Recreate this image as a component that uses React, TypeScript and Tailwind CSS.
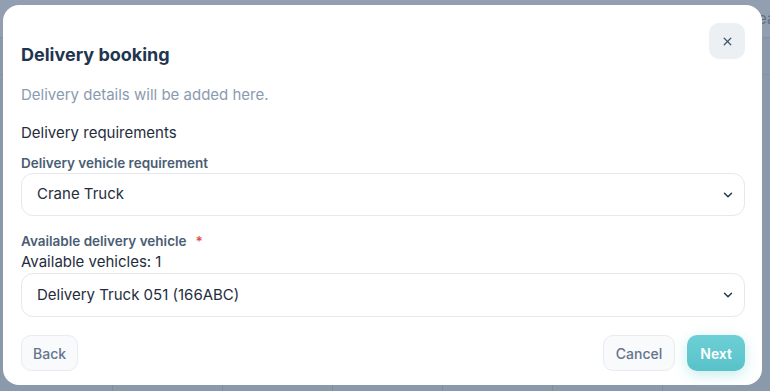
import { ChevronDown, X } from "lucide-react";

const columns = [0, 1, 2, 3, 4, 5, 6, 7];

const App = () => {
  return (
    <div className="relative h-[391px] w-[770px] overflow-hidden bg-[#8b9aab] font-['Inter',sans-serif]">
      {/* page behind the overlay */}
      <div className="flex h-full flex-col">
        <div className="h-[38px] border-b border-[#8393a5] bg-[#919fb0] pl-[758px] pt-[8px] text-[15px] text-[#5f6f82]">
          ea
        </div>
        <div className="h-[37px] border-b border-[#8393a5]" />
        <div className="flex flex-1 pl-[3px]">
          {columns.map((c) => (
            <div key={c} className="w-[110px] shrink-0 border-r border-[#7e8ea1]" />
          ))}
        </div>
      </div>

      {/* modal */}
      <div className="absolute left-[3px] top-[5px] flex h-[380px] w-[759px] flex-col rounded-[16px] bg-white pl-[18px] pr-[17px] pt-[36px]">
        <button
          type="button"
          className="absolute right-[17px] top-[18px] flex h-[36px] w-[36px] items-center justify-center rounded-[10px] bg-[#edf0f3] text-[#3f5670]"
        >
          <X size={13} strokeWidth={2.4} />
        </button>

        <h2 className="text-[18px] font-bold leading-[28px] text-[#1f3550]">
          Delivery booking
        </h2>
        <p className="mt-[14px] text-[15px] leading-[24px] text-[#8a9bb0]">
          Delivery details will be added here.
        </p>
        <p className="mt-[14px] text-[15px] leading-[24px] text-[#1f2d3d]">
          Delivery requirements
        </p>

        <label className="mt-[9px] text-[13.5px] font-semibold leading-[18px] text-[#4a5d74]">
          Delivery vehicle requirement
        </label>
        <div className="mt-[1px] flex h-[43px] items-center justify-between rounded-[12px] border border-[#e3e9ef] pl-[15px] pr-[9px] text-[15px] text-[#1f2d3d]">
          <span>Crane Truck</span>
          <ChevronDown size={14} strokeWidth={2.6} className="text-[#2a3a50]" />
        </div>

        <label className="mt-[16px] flex items-center gap-[9px] text-[13.5px] font-semibold leading-[18px] text-[#4a5d74]">
          Available delivery vehicle
          <span className="text-[#e04b4b]">*</span>
        </label>
        <p className="mt-[2px] text-[15px] leading-[20px] text-[#1f2d3d]">
          Available vehicles: 1
        </p>
        <div className="mt-[1px] flex h-[44px] items-center justify-between rounded-[12px] border border-[#e3e9ef] pl-[15px] pr-[9px] text-[15px] text-[#1f2d3d]">
          <span>Delivery Truck 051 (166ABC)</span>
          <ChevronDown size={14} strokeWidth={2.6} className="text-[#2a3a50]" />
        </div>

        <div className="mt-[18px] flex items-center justify-between">
          <button
            type="button"
            className="h-[36px] rounded-[10px] border border-[#e6ecf2] bg-[#f8fafc] px-[11px] text-[14px] font-medium text-[#64748b]"
          >
            Back
          </button>
          <div className="flex items-center gap-[12px]">
            <button
              type="button"
              className="h-[36px] rounded-[10px] border border-[#e6ecf2] bg-[#f8fafc] px-[12px] text-[14px] font-medium text-[#64748b]"
            >
              Cancel
            </button>
            <button
              type="button"
              className="h-[36px] rounded-[10px] bg-gradient-to-b from-[#6dd0d6] to-[#58c2c9] px-[13px] text-[14px] font-semibold text-white shadow-[0_4px_14px_rgba(94,201,207,0.35)]"
            >
              Next
            </button>
          </div>
        </div>
      </div>
    </div>
  );
};

export default App;
